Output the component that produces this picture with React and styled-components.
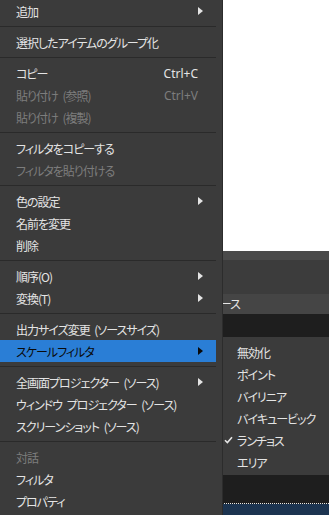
import React from 'react';
import styled, { createGlobalStyle } from 'styled-components';

const GlobalStyle = createGlobalStyle`
  html, body {
    margin: 0;
    padding: 0;
    background: #1e1e1e;
  }
  body {
    font-family: "Noto Sans CJK JP", "Noto Sans", sans-serif;
    font-feature-settings: "palt" 1;
  }
`

const Tela = styled.div`
  position: relative;
  width: 329px;
  height: 515px;
  overflow: hidden;
  display: flex;
  flex-direction: column;
`

const Preview = styled.div`
  height: 251px;
  background: #ffffff;
`

const DockTitulo = styled.div`
  height: 9px;
  background: #4a4a4a;
`

const DockCorpo = styled.div`
  height: 34px;
  background: #3c3c3c;
`

const LinhaFonte = styled.div`
  height: 20px;
  background: #454545;
  color: #e6e6e6;
  font-size: 12px;
  line-height: 20px;
  letter-spacing: -1px;
  padding-left: 211px;
`

const AreaEscura = styled.div`
  height: 189px;
  background: #1e1e1e;
  border-bottom: 1px dotted #e8e8e8;
`

const AreaAzul = styled.div`
  flex: 1;
  background: #1c3450;
`

const Menu = styled.div`
  position: absolute;
  top: 0;
  left: 0;
  width: 216px;
  padding-right: 6px;
  background: #3b3b3b;
  border-right: 1px solid #2c2c2c;
  height: 515px;
`

const SubMenu = styled.div`
  position: absolute;
  top: 337px;
  left: 223px;
  width: 106px;
  padding: 4px 0 2px;
  background: #3b3b3b;
`

const Item = styled.div`
  height: 22px;
  display: flex;
  align-items: center;
  padding: 0 13px 0 16px;
  font-size: 12px;
  letter-spacing: -1px;
  word-spacing: 3px;
  white-space: pre;
  color: ${p => (p.$ativo ? '#0a0a0a' : p.$desativado ? '#7d7d7d' : '#e4e4e4')};
  background: ${p => (p.$ativo ? '#2a7ed6' : 'transparent')};
  .rotulo {
    flex: 1;
  }
  .atalho {
    padding-right: 5px;
    letter-spacing: 0;
    word-spacing: 0;
    font-family: "Noto Sans", sans-serif;
  }
`

const Seta = styled.span`
  width: 0;
  height: 0;
  border-top: 4px solid transparent;
  border-bottom: 4px solid transparent;
  border-left: 5px solid ${p => (p.$ativo ? '#0a0a0a' : '#e4e4e4')};
`

const Separador = styled.div`
  height: 1px;
  margin: 4px 0;
  background: #2a2a2a;
`

const SubItem = styled.div`
  height: 22px;
  display: flex;
  align-items: center;
  font-size: 12px;
  letter-spacing: -1px;
  color: #e4e4e4;
  white-space: nowrap;
  .marca {
    width: 13px;
    margin-left: 1px;
    display: flex;
    align-items: center;
  }
`

const menu = [
  { t: '追加', seta: true },
  '-',
  { t: '選択したアイテムのグループ化' },
  '-',
  { t: 'コピー', atalho: 'Ctrl+C' },
  { t: '貼り付け (参照)', atalho: 'Ctrl+V', off: true },
  { t: '貼り付け (複製)', off: true },
  '-',
  { t: 'フィルタをコピーする' },
  { t: 'フィルタを貼り付ける', off: true },
  '-',
  { t: '色の設定', seta: true },
  { t: '名前を変更' },
  { t: '削除' },
  '-',
  { t: '順序(O)', seta: true },
  { t: '変換(T)', seta: true },
  '-',
  { t: '出力サイズ変更 (ソースサイズ)' },
  { t: 'スケールフィルタ', seta: true, ativo: true },
  '-',
  { t: '全画面プロジェクター (ソース)', seta: true },
  { t: 'ウィンドウ プロジェクター (ソース)' },
  { t: 'スクリーンショット (ソース)' },
  '-',
  { t: '対話', off: true },
  { t: 'フィルタ' },
  { t: 'プロパティ' },
]

const filtros = ['無効化', 'ポイント', 'バイリニア', 'バイキュービック', 'ランチョス', 'エリア']

export default function App() {
  return (
    <>
      <GlobalStyle />
      <Tela>
        <Preview />
        <DockTitulo />
        <DockCorpo />
        <LinhaFonte>ソース</LinhaFonte>
        <AreaEscura />
        <AreaAzul />

        <Menu>
          {menu.map((item, i) =>
            item === '-' ? (
              <Separador key={i} />
            ) : (
              <Item key={i} $ativo={item.ativo} $desativado={item.off}>
                <span className='rotulo'>{item.t}</span>
                {item.atalho && <span className='atalho'>{item.atalho}</span>}
                {item.seta && <Seta $ativo={item.ativo} />}
              </Item>
            )
          )}
        </Menu>

        <SubMenu>
          {filtros.map((f) => (
            <SubItem key={f}>
              <span className='marca'>
                {f === 'ランチョス' && (
                  <svg width='9' height='8' viewBox='0 0 9 8'>
                    <path d='M1 4.2 L3.4 6.6 L8 1.2' stroke='#e4e4e4' strokeWidth='1.6' fill='none' />
                  </svg>
                )}
              </span>
              {f}
            </SubItem>
          ))}
        </SubMenu>
      </Tela>
    </>
  )
}
